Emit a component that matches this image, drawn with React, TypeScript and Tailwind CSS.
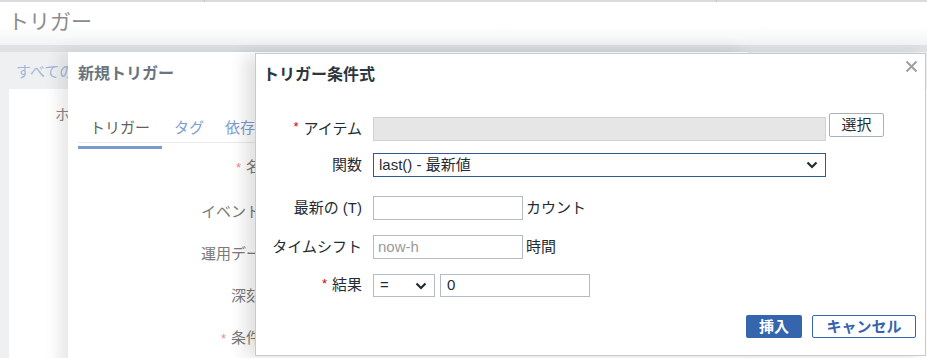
function Chevron({ className = "" }: { className?: string }) {
  return (
    <svg width="12" height="8" viewBox="0 0 12 8" className={className}>
      <polyline points="1.5,1.5 6,6 10.5,1.5" fill="none" stroke="#1f2c33" strokeWidth="2.2" />
    </svg>
  );
}

function Star() {
  return <span className="text-[#d40000] text-[13px] mr-[5px] relative top-[-2px]">*</span>;
}

export default function App() {
  const bgLabels = [
    { star: true, text: "名前", mt: "mt-[8px]" },
    { star: false, text: "イベント名", mt: "mt-[24px]" },
    { star: false, text: "運用データ", mt: "mt-[22px]" },
    { star: false, text: "深刻度", mt: "mt-[22px]" },
    { star: true, text: "条件式", mt: "mt-[22px]" },
  ];

  return (
    <div className="relative w-[927px] h-[358px] overflow-hidden bg-[#eef0f2] font-['Liberation_Sans','Noto_Sans_CJK_JP',sans-serif]">
      {/* page behind the dialogs */}
      <div className="flex h-[2px] bg-[#d9dbdd]">
        <div className="w-[205px] border-r border-[#c4c7ca]" />
        <div className="w-[512px] border-r border-[#c4c7ca]" />
      </div>
      <div className="h-[43px] bg-gradient-to-b from-white from-55% to-[#f2f3f5] pl-[8px] pt-[6px] text-[21px] leading-[28px] text-[#8c8c8c]">
        トリガー
      </div>
      <div className="h-[7px] bg-[#dfe2e5]" />
      <div className="ml-[16px] mt-[10px] w-[52px] overflow-hidden whitespace-nowrap text-[15px] leading-[20px] text-[#a3b8dc]">
        すべての
      </div>
      <div className="ml-[9px] mt-[7px] h-[300px] bg-white pl-[46px] pt-[16px] text-[15px] leading-[20px] text-[#8a8a8a]">
        ホスト
      </div>

      {/* first dialog */}
      <div className="absolute left-[68px] top-[52px] w-[680px] h-[320px] bg-white shadow-[-8px_0_16px_rgba(0,0,0,0.1)]">
        <div className="pl-[10px] pt-[12px] text-[16px] leading-[20px] font-bold text-[#6b747c]">新規トリガー</div>
        <div className="pl-[10px] mt-[34px]">
          <div className="flex text-[15px] leading-[20px]">
            <div className="w-[84px] text-center text-[#5f5f5f]">トリガー</div>
            <div className="px-[12px] text-[#7c9dcf]">タグ</div>
            <div className="px-[9px] text-[#7c9dcf]">依存関係</div>
          </div>
          <div className="mt-[4px] h-px bg-[#e9ebed]" />
          <div className="mt-[3px] h-[3px] w-[84px] bg-[#7b9bcc]" />
        </div>
        <div className="flex flex-col w-[208px] text-right text-[15px] leading-[20px] text-[#7a7a7a]">
          {bgLabels.map((l) => (
            <div key={l.text} className={l.mt}>
              {l.star && <span className="text-[#e88b8b] text-[13px] mr-[5px]">*</span>}
              {l.text}
            </div>
          ))}
        </div>
      </div>

      {/* expression dialog */}
      <div className="absolute left-[255px] top-[53px] w-[671px] h-[303px] border border-[#c6cbd0] bg-white shadow-[-10px_2px_16px_rgba(0,0,0,0.12)] text-[15px] text-[#1f2c33]">
        <div className="pl-[7px] pt-[11px] text-[16px] leading-[20px] font-bold text-[#2a3640]">トリガー条件式</div>
        <button className="absolute top-[4px] right-[6px] w-[16px] h-[16px] flex items-center justify-center">
          <svg width="13" height="13" viewBox="0 0 13 13">
            <path d="M1.5 1.5 L11.5 11.5 M11.5 1.5 L1.5 11.5" stroke="#9aa0a6" strokeWidth="2" />
          </svg>
        </button>

        <div className="mt-[28px] flex items-start">
          <div className="w-[106px] h-[24px] mt-[4px] flex items-center justify-end">
            <Star />アイテム
          </div>
          <div className="ml-[11px] mt-[4px] w-[453px] h-[24px] bg-[#e6e6e6] border border-[#cfd3d7]" />
          <button className="ml-[3px] w-[55px] h-[24px] border border-[#a9b1b8] rounded-[2px] bg-white text-[15px] leading-[20px] text-[#1f2c33]">
            選択
          </button>
        </div>

        <div className="mt-[12px] flex items-center h-[24px]">
          <div className="w-[106px] text-right">関数</div>
          <div className="ml-[11px] w-[453px] h-[24px] border border-[#2e5a94] flex items-center justify-between pl-[5px] pr-[7px] leading-[20px]">
            <span>last() - 最新値</span>
            <Chevron />
          </div>
        </div>

        <div className="mt-[19px] flex items-center h-[24px]">
          <div className="w-[106px] text-right">最新の (T)</div>
          <div className="ml-[11px] w-[150px] h-[24px] border border-[#b4bcc3]" />
          <span className="ml-[3px]">カウント</span>
        </div>

        <div className="mt-[15px] flex items-center h-[24px]">
          <div className="w-[106px] text-right">タイムシフト</div>
          <div className="ml-[11px] w-[150px] h-[24px] border border-[#b4bcc3] pl-[4px] flex items-center text-[#9a9a9a]">
            now-h
          </div>
          <span className="ml-[3px]">時間</span>
        </div>

        <div className="mt-[15px] flex items-center h-[23px]">
          <div className="w-[106px] flex items-center justify-end">
            <Star />結果
          </div>
          <div className="ml-[11px] w-[62px] h-[23px] border border-[#b4bcc3] flex items-center justify-between pl-[6px] pr-[7px]">
            <span>=</span>
            <Chevron />
          </div>
          <div className="ml-[5px] w-[150px] h-[23px] border border-[#b4bcc3] pl-[6px] flex items-center">0</div>
        </div>

        <div className="mt-[18px] flex justify-end pr-[9px] gap-[10px]">
          <button className="w-[56px] h-[23px] rounded-[2px] bg-[#3565ad] text-white font-bold text-[15px] leading-[20px]">
            挿入
          </button>
          <button className="w-[104px] h-[23px] rounded-[2px] border border-[#3565ad] bg-white text-[#3565ad] font-bold text-[15px] leading-[20px]">
            キャンセル
          </button>
        </div>
      </div>
    </div>
  );
}
